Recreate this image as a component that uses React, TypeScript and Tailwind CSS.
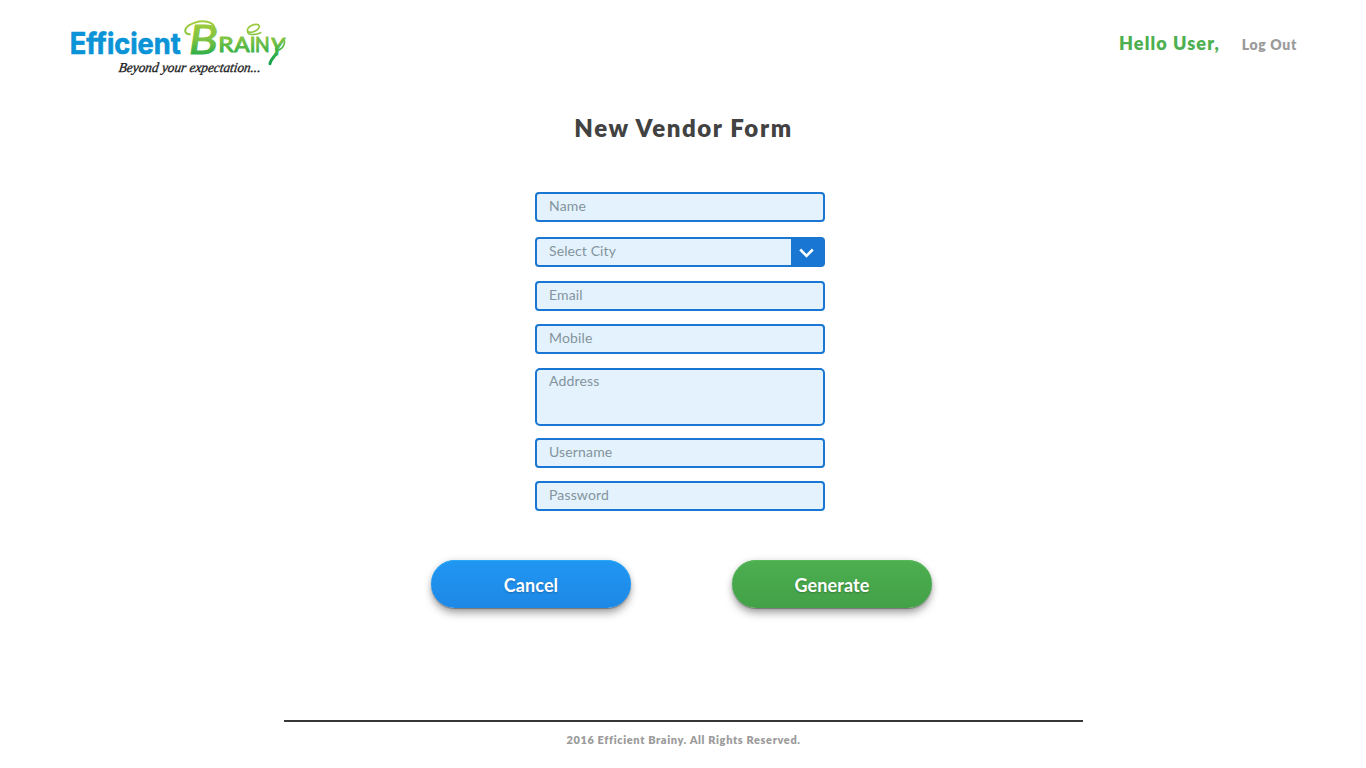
import React from 'react';

function Logo() {
  return (
    <svg className="block h-[75px] w-[240px]" viewBox="0 0 720 225" role="img" aria-label="Efficient Brainy">
      <defs>
        <linearGradient id="leaf" gradientUnits="userSpaceOnUse" x1="0" y1="30" x2="0" y2="160">
          <stop offset="0" stopColor="#a5cd39" />
          <stop offset="0.45" stopColor="#7cc242" />
          <stop offset="0.8" stopColor="#2fae49" />
          <stop offset="1" stopColor="#12a14b" />
        </linearGradient>
      </defs>
      <text x="29" y="133" textLength="333" lengthAdjust="spacingAndGlyphs" fontSize="88" fontWeight="700" fill="#0a93d6" stroke="#0a93d6" strokeWidth="2" fontFamily="Inter, sans-serif">Efficient</text>
      <g fill="url(#leaf)" stroke="url(#leaf)" strokeWidth="3" strokeLinejoin="round" fontFamily="Lato, sans-serif">
        <text x="386" y="131" fontSize="124" textLength="88" lengthAdjust="spacingAndGlyphs" fontStyle="italic">B</text>
        <text x="475" y="127" fontSize="62" textLength="46" lengthAdjust="spacingAndGlyphs">R</text>
        <text x="523" y="127" fontSize="62" textLength="46" lengthAdjust="spacingAndGlyphs">A</text>
        <text x="569" y="127" fontSize="62">I</text>
        <text x="585" y="127" fontSize="62" textLength="44" lengthAdjust="spacingAndGlyphs">N</text>
        <text x="631" y="136" fontSize="72" textLength="42" lengthAdjust="spacingAndGlyphs" fontStyle="italic">Y</text>
      </g>
      <g fill="none" stroke="url(#leaf)" strokeLinecap="round">
        <path strokeWidth="6" d="M389 73C366 70 373 48 405 38C430 30 458 34 463 52" />
        <ellipse cx="580" cy="55" rx="19" ry="10" strokeWidth="5" transform="rotate(-25 580 55)" />
        <path strokeWidth="5" d="M563 64C562 76 584 76 602 68" />
        <path strokeWidth="9" d="M648 132C640 143 631 151 630 161" />
        <path strokeWidth="5" d="M649 112C640 124 662 124 671 106C676 96 674 88 667 90" />
      </g>
      <text x="186" y="187" transform="skewX(-8) translate(15 0)" textLength="426" lengthAdjust="spacingAndGlyphs" fontSize="41" fontStyle="italic" fill="#1c1c1c" stroke="#1c1c1c" strokeWidth="1" fontFamily="'Liberation Serif', serif">Beyond your expectation...</text>
    </svg>
  );
}

const field =
  'block w-full rounded-[4px] border-2 border-[#1976d2] bg-[#e3f2fd] px-3 text-sm tracking-[0.15px] text-[#546e7a] placeholder:text-[#84949c] placeholder:opacity-100 outline-none';

const button =
  'h-12 w-[200px] rounded-full pt-[2px] text-lg font-bold tracking-[0.1px] text-white [text-shadow:0_1px_2px_rgba(0,0,0,0.25)]';

export default function App() {
  return (
    <div className="flex h-[768px] w-full flex-col overflow-hidden bg-white font-['Lato',sans-serif]">
      <header className="flex h-[85px] items-start justify-between pt-[10px] pr-[69px] pl-[60px]">
        <Logo />
        <nav className="flex items-baseline pt-[19px]">
          <span className="text-lg font-extrabold tracking-[1.1px] text-[#4caf50]">Hello User,</span>
          <a href="#" className="ml-[22px] text-sm font-extrabold tracking-[0.65px] text-[#9b9b9b]">Log Out</a>
        </nav>
      </header>

      <main className="flex flex-col">
        <h1 className="mt-[25px] pl-px text-center text-2xl leading-9 font-extrabold tracking-[1.6px] text-[#424242]">New Vendor Form</h1>
        <form className="mt-[46px] ml-[535px] w-[290px]">
          <input className={`${field} h-[30px] pb-[3px]`} placeholder="Name" />
          <div className="mt-[15px] flex h-[30px] w-full overflow-hidden rounded-[4px] border-2 border-[#1976d2] bg-[#1976d2]">
            <span className="flex-1 bg-[#e3f2fd] pl-3 text-sm leading-6 tracking-[0.1px] text-[#84949c]">Select City</span>
            <button type="button" aria-label="Select City" className="flex w-8 items-center justify-center bg-[#1976d2]">
              <svg className="mt-px mr-px h-[10px] w-[15px]" viewBox="0 0 15 10" fill="none" stroke="white" strokeWidth="2.6">
                <path d="M1.2 1.5L7.5 7.8L13.8 1.5" />
              </svg>
            </button>
          </div>
          <input className={`${field} mt-[14px] h-[30px] pb-[3px]`} placeholder="Email" />
          <input className={`${field} mt-[13px] h-[30px] pb-[3px]`} placeholder="Mobile" />
          <textarea className={`${field} mt-[14px] h-[58px] resize-none rounded-[5px] pt-px`} placeholder="Address" />
          <input className={`${field} mt-[12px] h-[30px] pb-[3px]`} placeholder="Username" />
          <input className={`${field} mt-[13px] h-[30px] pb-[3px]`} placeholder="Password" />
        </form>
        <div className="mt-[49px] flex gap-[101px] pl-[431px]">
          <button className={`${button} bg-linear-to-b from-[#2196f3] to-[#1e88e5] shadow-[0_6px_8px_-1px_rgba(0,0,0,0.35),0_0_6px_rgba(0,0,0,0.12),0_1px_1px_rgba(0,0,0,0.3),inset_0_1px_0_#29a9f4]`}>Cancel</button>
          <button className={`${button} bg-linear-to-b from-[#4caf50] to-[#43a047] shadow-[0_6px_8px_-1px_rgba(0,0,0,0.35),0_0_6px_rgba(0,0,0,0.12),0_1px_1px_rgba(0,0,0,0.3),inset_0_1px_0_#58b95c]`}>Generate</button>
        </div>
      </main>

      <footer className="mt-[112px] ml-[284px] w-[799px] border-t-2 border-[#37373a] pt-[10px] text-center text-[11px] leading-4 font-extrabold tracking-[0.63px] text-[#9b9b9b]">
        2016 Efficient Brainy. All Rights Reserved.
      </footer>
    </div>
  );
}
